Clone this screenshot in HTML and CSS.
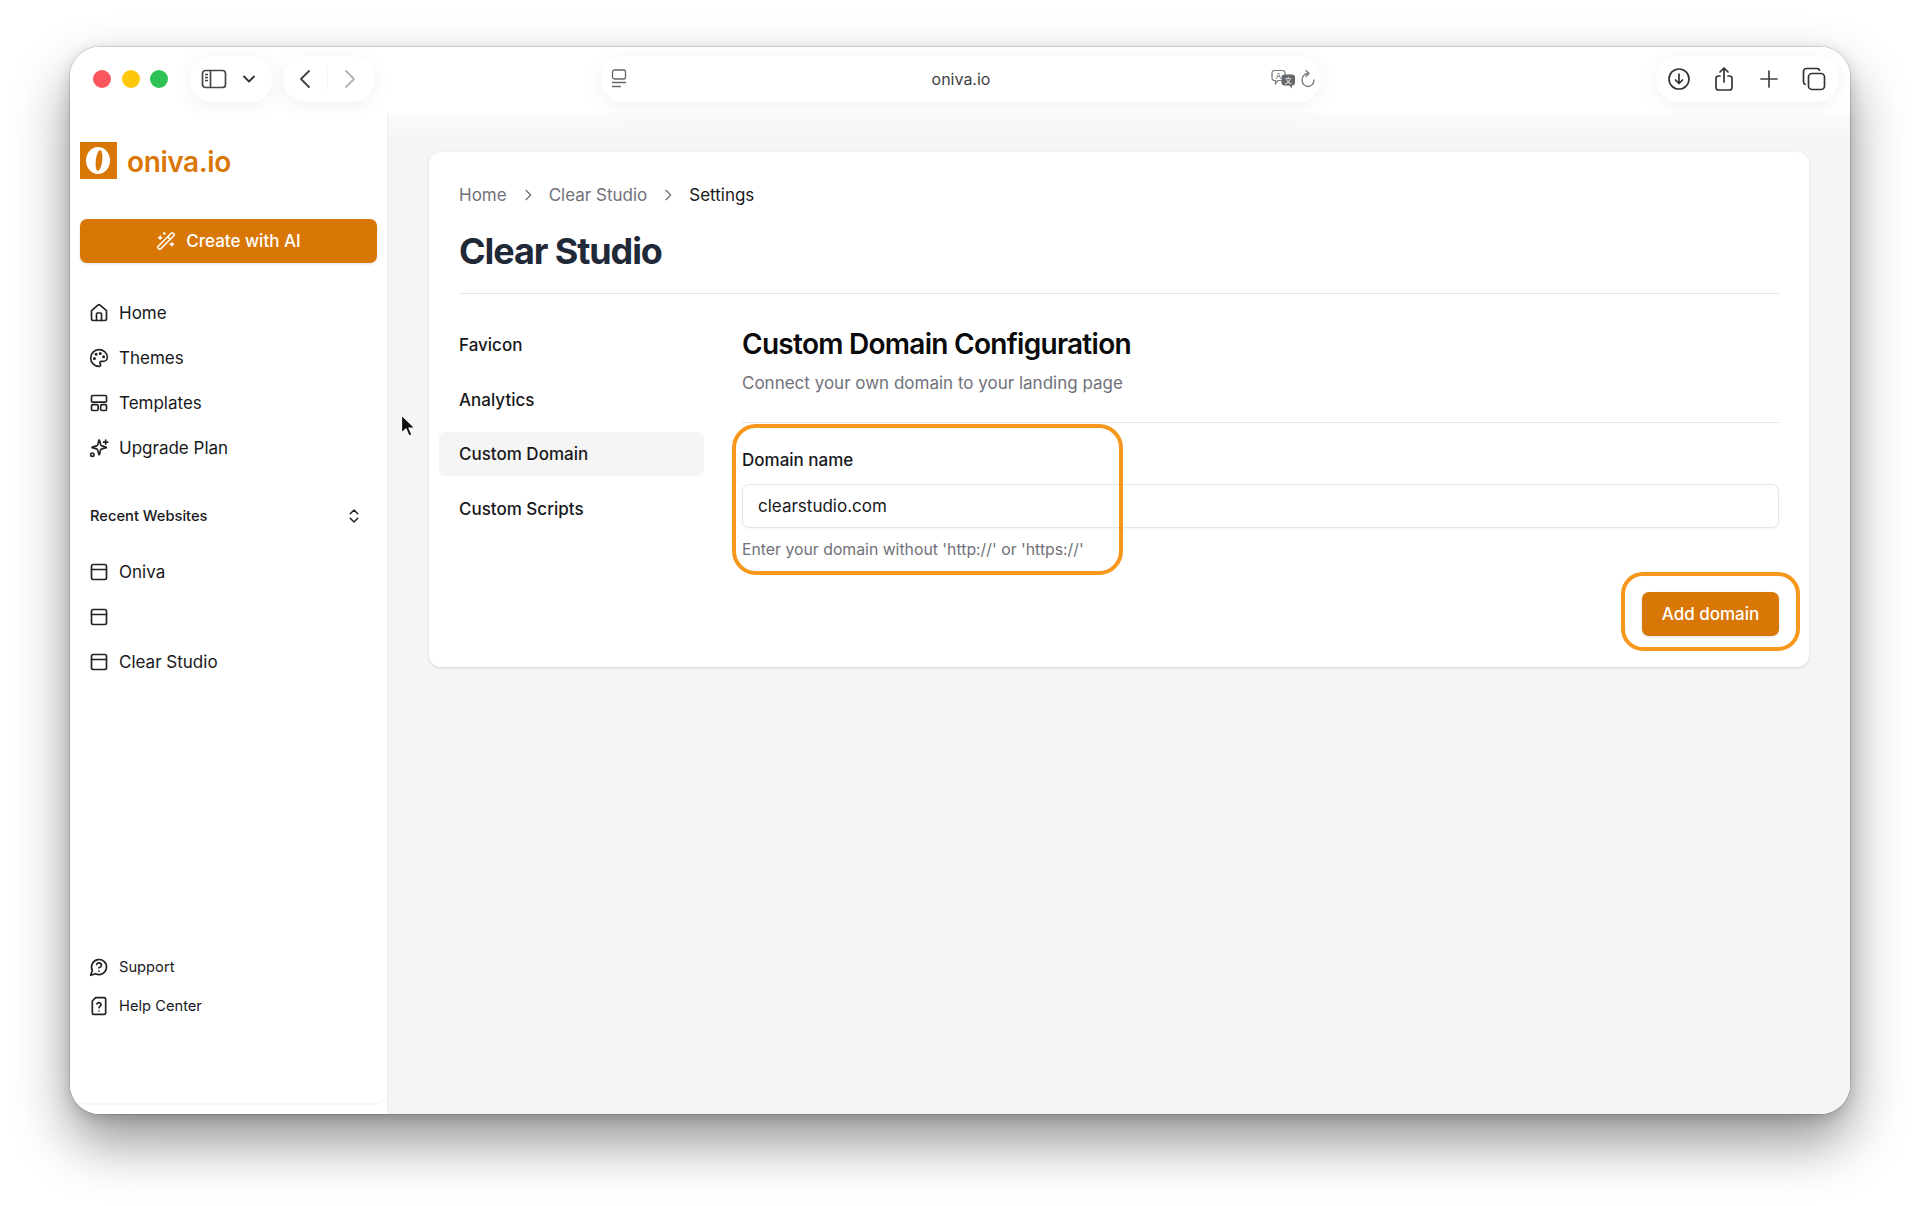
FILE: index.html
```html
<!DOCTYPE html>
<html lang="en">
<head>
    <meta charset="UTF-8">
    <meta name="viewport" content="width=device-width, initial-scale=1.0">
    <title>oniva.io - Clear Studio</title>
    <link rel="stylesheet" href="styles.css">
</head>
<body>
    <div class="window">
        <div class="toolbar">
            <div class="lights">
                <span class="light red"></span>
                <span class="light yellow"></span>
                <span class="light green"></span>
            </div>
            <div class="pill pill-sidebar">
                <svg class="tb-icon" width="26" height="20" viewBox="0 0 26 20" fill="none" stroke="#444" stroke-width="1.7"><rect x="1.5" y="1.5" width="23" height="17" rx="3"/><path d="M9.5 1.5v17"/><path d="M4 5.5h3M4 8.5h3M4 11.5h3" stroke-width="1.3"/></svg>
                <svg class="tb-icon" width="14" height="10" viewBox="0 0 14 10" fill="none" stroke="#333" stroke-width="1.8" stroke-linecap="round" stroke-linejoin="round"><path d="M2 2.5 7 7.5l5-5"/></svg>
            </div>
            <div class="pill pill-nav">
                <svg width="14" height="20" viewBox="0 0 14 20" fill="none" stroke="#444" stroke-width="1.9" stroke-linecap="round" stroke-linejoin="round"><path d="M11 2 3 10l8 8"/></svg>
                <span class="nav-sep"></span>
                <svg width="14" height="20" viewBox="0 0 14 20" fill="none" stroke="#b5b5b5" stroke-width="1.9" stroke-linecap="round" stroke-linejoin="round"><path d="m3 2 8 8-8 8"/></svg>
            </div>
            <div class="pill pill-url">
                <svg class="url-tab" width="16" height="20" viewBox="0 0 16 20" fill="none" stroke="#666" stroke-width="1.3"><rect x="1.5" y="1" width="13" height="9" rx="2"/><path d="M1 13.5h14M1 17.5h9"/></svg>
                <span class="url-text">oniva.io</span>
                <div class="url-right">
                    <svg width="25" height="20" viewBox="0 0 25 20"><path d="M3.5 1.5h8a2.5 2.5 0 0 1 2.5 2.5v5a2.5 2.5 0 0 1-2.5 2.5H7l-2.5 3v-3h-1A2.5 2.5 0 0 1 1 9V4a2.5 2.5 0 0 1 2.5-2.5z" fill="#fff" stroke="#777" stroke-width="1.2"/><text x="7.5" y="9.5" text-anchor="middle" class="tr-a">A</text><path d="M13.5 5.5H21a3 3 0 0 1 3 3v5a3 3 0 0 1-3 3v3l-2.5-3h-5a3 3 0 0 1-3-3v-5a3 3 0 0 1 3-3z" fill="#666"/><text x="17.3" y="14.3" text-anchor="middle" class="tr-b">文</text></svg>
                    <svg width="16" height="20" viewBox="0 0 16 20" fill="none" stroke="#777" stroke-width="1.3" stroke-linecap="round" stroke-linejoin="round"><path d="M8 4.500A6 6.500 0 1 0 14 11"/><path d="M6 1.500l3 3-3 3"/></svg>
                </div>
            </div>
            <div class="pill pill-actions">
                <svg width="24" height="24" viewBox="0 0 24 24" fill="none" stroke="#333" stroke-width="1.7" stroke-linecap="round" stroke-linejoin="round"><circle cx="12" cy="12" r="10"/><path d="M12 7v9.5M8.500 13l3.500 3.500 3.500-3.500"/></svg>
                <svg width="24" height="26" viewBox="0 0 24 26" fill="none" stroke="#333" stroke-width="1.7" stroke-linecap="round" stroke-linejoin="round"><path d="M8 10H6.500A2.500 2.500 0 0 0 4 12.500v9A2.500 2.500 0 0 0 6.500 24h11a2.500 2.500 0 0 0 2.500-2.500v-9a2.500 2.500 0 0 0-2.500-2.500H16"/><path d="M12 16V2M8 6l4-4 4 4"/></svg>
                <svg width="24" height="24" viewBox="0 0 24 24" fill="none" stroke="#444" stroke-width="1.7" stroke-linecap="round"><path d="M12 4v16M4 12h16"/></svg>
                <svg width="24" height="24" viewBox="0 0 24 24" fill="none" stroke="#333" stroke-width="1.7"><rect x="6.500" y="6.500" width="16" height="16" rx="3.500"/><path d="M4 17.500A2.500 2.500 0 0 1 1.500 15V4.500a3 3 0 0 1 3-3H15a2.500 2.500 0 0 1 2.500 2.500"/></svg>
            </div>
        </div>

        <div class="app">
            <aside class="sidebar">
                <div class="sidebar-inner">
                    <div class="logo">
                        <svg width="37" height="37" viewBox="0 0 37 37"><rect width="37" height="37" fill="#d97706"/><ellipse cx="18" cy="18.500" rx="12" ry="13.500" fill="#fff"/><ellipse cx="19" cy="18.500" rx="3.200" ry="10.500" transform="rotate(7 19 18.500)" fill="#d97706"/></svg>
                        <span class="logo-text">oniva.io</span>
                    </div>
                    <button class="btn-create">
                        <svg width="20" height="20" viewBox="0 0 24 24" fill="none" stroke="#fff" stroke-width="1.8" stroke-linecap="round" stroke-linejoin="round"><path d="m21.640 3.640-1.280-1.280a1.210 1.210 0 0 0-1.720 0L2.360 18.640a1.210 1.210 0 0 0 0 1.720l1.280 1.280a1.200 1.200 0 0 0 1.720 0L21.640 5.360a1.200 1.200 0 0 0 0-1.720"/><path d="m14 7 3 3M5 6v4M19 14v4M10 2v2M7 8H3M21 16h-4M11 3H9"/></svg>
                        Create with AI
                    </button>
                    <nav class="nav">
                        <a class="nav-item">
                            <svg class="icon" viewBox="0 0 24 24"><path d="M15 21v-8a1 1 0 0 0-1-1h-4a1 1 0 0 0-1 1v8"/><path d="M3 10a2 2 0 0 1 .709-1.528l7-5.999a2 2 0 0 1 2.582 0l7 5.999A2 2 0 0 1 21 10v9a2 2 0 0 1-2 2H5a2 2 0 0 1-2-2z"/></svg>
                            Home
                        </a>
                        <a class="nav-item">
                            <svg class="icon" viewBox="0 0 24 24"><path d="M12 22a1 1 0 0 1 0-20 10 9 0 0 1 10 9 5 5 0 0 1-5 5h-2.250a1.750 1.750 0 0 0-1.400 2.800l.3.4a1.750 1.750 0 0 1-1.400 2.800z"/><circle cx="13.500" cy="6.500" r=".8" fill="#222"/><circle cx="17.500" cy="10.500" r=".8" fill="#222"/><circle cx="6.500" cy="12.500" r=".8" fill="#222"/><circle cx="8.500" cy="7.500" r=".8" fill="#222"/></svg>
                            Themes
                        </a>
                        <a class="nav-item">
                            <svg class="icon" viewBox="0 0 24 24"><rect x="3" y="3" width="18" height="8" rx="1.500"/><rect x="3" y="14" width="8" height="7" rx="1.500"/><rect x="14" y="14" width="7" height="7" rx="1.500"/></svg>
                            Templates
                        </a>
                        <a class="nav-item">
                            <svg class="icon" viewBox="0 0 24 24"><path d="M9.500 14.500A2 2 0 0 0 8 13l-5-1.300a.4.4 0 0 1 0-.8L8 9.500A2 2 0 0 0 9.500 8l1.300-5.200a.4.4 0 0 1 .8 0L13 8a2 2 0 0 0 1.500 1.500l5 1.400a.4.4 0 0 1 0 .8l-5 1.300A2 2 0 0 0 13 14l-1.400 5.600a.4.4 0 0 1-.8 0z" transform="translate(1 0)"/><path d="M20 2.500v5M17.500 5h5"/><circle cx="4" cy="20" r="2"/></svg>
                            Upgrade Plan
                        </a>
                    </nav>
                    <div class="recent-head">
                        <span>Recent Websites</span>
                        <svg class="icon-sm" viewBox="0 0 24 24"><path d="m7 15 5 5 5-5"/><path d="m7 9 5-5 5 5"/></svg>
                    </div>
                    <nav class="nav">
                        <a class="nav-item">
                            <svg class="icon" viewBox="0 0 24 24"><rect x="3" y="3" width="18" height="18" rx="2"/><path d="M3 9h18"/></svg>
                            Oniva
                        </a>
                        <a class="nav-item">
                            <svg class="icon" viewBox="0 0 24 24"><rect x="3" y="3" width="18" height="18" rx="2"/><path d="M3 9h18"/></svg>
                        </a>
                        <a class="nav-item">
                            <svg class="icon" viewBox="0 0 24 24"><rect x="3" y="3" width="18" height="18" rx="2"/><path d="M3 9h18"/></svg>
                            Clear Studio
                        </a>
                    </nav>
                    <div class="nav-bottom">
                        <a class="nav-item small">
                            <svg class="icon" viewBox="0 0 24 24"><path d="M7.900 20A9 9 0 1 0 4 16.100L2 22Z"/><path d="M9.090 9a3 3 0 0 1 5.830 1c0 2-3 3-3 3"/><path d="M12 17h.01"/></svg>
                            Support
                        </a>
                        <a class="nav-item small">
                            <svg class="icon" viewBox="0 0 24 24"><path d="M8 2h10a2 2 0 0 1 2 2v16a2 2 0 0 1-2 2H6a2 2 0 0 1-2-2V6z"/><path d="M9.500 9.500a2.600 2.600 0 0 1 5 .8c0 1.700-2.500 2.400-2.500 3.700"/><path d="M12 18h.01"/></svg>
                            Help Center
                        </a>
                    </div>
                </div>
            </aside>

            <main class="main">
                <section class="card">
                    <div class="breadcrumb">
                        <span>Home</span>
                        <svg class="crumb-sep" viewBox="0 0 24 24"><path d="m9 5 7 7-7 7"/></svg>
                        <span>Clear Studio</span>
                        <svg class="crumb-sep" viewBox="0 0 24 24"><path d="m9 5 7 7-7 7"/></svg>
                        <span class="current">Settings</span>
                    </div>
                    <h1>Clear Studio</h1>
                    <div class="settings">
                        <ul class="tabs">
                            <li>Favicon</li>
                            <li>Analytics</li>
                            <li class="active">Custom Domain</li>
                            <li>Custom Scripts</li>
                        </ul>
                        <div class="panel">
                            <h2>Custom Domain Configuration</h2>
                            <p class="sub">Connect your own domain to your landing page</p>
                            <label class="field-label" for="domain">Domain name</label>
                            <input class="field" id="domain" type="text" value="clearstudio.com">
                            <p class="hint">Enter your domain without 'http://' or 'https://'</p>
                            <div class="actions">
                                <button class="btn-add">Add domain</button>
                            </div>
                        </div>
                    </div>
                </section>
            </main>
        </div>

        <!-- annotation boxes + pointer drawn over the shot -->
        <div class="mark mark-field"></div>
        <div class="mark mark-button"></div>
        <svg class="cursor" width="16" height="24" viewBox="0 0 16 24"><path d="M1.500 1v18l4.500-4 3 7 3-1.300-3-6.700h6z" fill="#111" stroke="#fff" stroke-width="1.200"/></svg>
    </div>
</body>
</html>
```

FILE: styles.css
```css
* {
    box-sizing: border-box;
}
body {
    margin: 0;
    background: #fff;
    font-family: Inter, "Liberation Sans", sans-serif;
    color: #18181b;
}
.window {
    position: relative;
    width: 1780px;
    height: 1067px;
    margin: 47px 70px 0;
    background: #fff;
    border-radius: 30px;
    overflow: hidden;
}
body::before {
    content: "";
    position: absolute;
    left: 70px;
    top: 47px;
    width: 1780px;
    height: 1067px;
    border-radius: 30px;
    box-shadow: 0 0 0 1px rgba(0, 0, 0, .12), 0 28px 55px rgba(0, 0, 0, .42), 0 4px 14px rgba(0, 0, 0, .16);
}

/* browser toolbar */
.toolbar {
    display: flex;
    align-items: center;
    height: 66px;
    padding: 0 12px 2px 23px;
    background: #fff;
}
.lights {
    display: flex;
    gap: 10.5px;
    width: 97px;
}
.light {
    width: 18px;
    height: 18px;
    border-radius: 50%;
}
.red { background: #f9575f; }
.yellow { background: #fdc70a; }
.green { background: #2fc255; }
.pill {
    display: flex;
    align-items: center;
    height: 46px;
    border-radius: 23px;
    background: #fff;
    box-shadow: 0 4px 22px rgba(0, 0, 0, .06);
}
.pill-sidebar {
    width: 83px;
    padding: 0 17px 0 11px;
    justify-content: space-between;
}
.pill-nav {
    width: 91px;
    margin-left: 10px;
    padding: 0 17px 0 15px;
    justify-content: space-between;
}
.nav-sep {
    width: 1px;
    height: 24px;
    background: #f4f4f4;
}
.pill-url {
    position: relative;
    width: 720px;
    margin-left: 227px;
    justify-content: center;
}
.url-tab {
    position: absolute;
    left: 10px;
    top: 13px;
}
.url-text {
    font-size: 16px;
    color: #3f3f46;
}
.url-right {
    position: absolute;
    right: 5px;
    top: 13px;
    display: flex;
    gap: 4px;
}
.tr-a {
    font-family: Inter, sans-serif;
    font-size: 8px;
    fill: #777;
}
.tr-b {
    font-family: "Noto Sans CJK SC", sans-serif;
    font-size: 7px;
    fill: #fff;
}
.pill-actions {
    width: 182px;
    margin-left: auto;
    padding: 0 12px 0 11px;
    justify-content: space-between;
}

.app {
    display: flex;
    height: 1001px;
}

/* sidebar */
.sidebar {
    width: 318px;
    padding-bottom: 9px;
    border-right: 1px solid #efefef;
    background: #fff;
}
.sidebar-inner {
    display: flex;
    flex-direction: column;
    height: 100%;
    padding: 29px 10px 0;
    border-radius: 0 0 14px 14px;
    border-bottom: 2px solid #f7f7f7;
}
.logo {
    display: flex;
    align-items: center;
    gap: 10px;
    height: 37px;
}
.logo-text {
    margin-top: 2px;
    font-size: 28px;
    font-weight: 600;
    color: #d97706;
    letter-spacing: -.4px;
}
.btn-create {
    display: flex;
    align-items: center;
    justify-content: center;
    gap: 10px;
    width: 297px;
    height: 44px;
    margin-top: 40px;
    border: none;
    border-radius: 7px;
    background: #d97706;
    color: #fff;
    font-family: inherit;
    font-size: 17px;
    font-weight: 500;
    box-shadow: 0 1px 3px rgba(0, 0, 0, .12);
}
.nav {
    display: flex;
    flex-direction: column;
    margin-top: 27px;
}
.nav-item {
    display: flex;
    align-items: center;
    gap: 10px;
    height: 45px;
    padding-left: 9px;
    font-size: 17px;
}
.nav-item.small {
    height: 39px;
    font-size: 14.7px;
}
.icon, .icon-sm, .crumb-sep {
    flex: none;
    fill: none;
    stroke: #222;
    stroke-width: 2;
    stroke-linecap: round;
    stroke-linejoin: round;
}
.icon {
    width: 20px;
    height: 20px;
}
.icon-sm {
    width: 18px;
    height: 18px;
}
.recent-head {
    display: flex;
    align-items: center;
    justify-content: space-between;
    height: 20px;
    margin-top: 36px;
    padding: 0 14px 0 10px;
    font-size: 14.7px;
    font-weight: 500;
}
.recent-head + .nav {
    margin-top: 23px;
}
.nav-bottom {
    margin-top: auto;
    padding-bottom: 78px;
}

/* main area */
.main {
    flex: 1;
    padding: 39px 41px 0;
    background: linear-gradient(#fbfbfb, #f5f5f5 24px);
}
.card {
    height: 515px;
    padding: 31px 30px 0;
    background: #fff;
    border-radius: 12px;
    box-shadow: 0 1px 3px rgba(0, 0, 0, .13);
}
.breadcrumb {
    display: flex;
    align-items: center;
    height: 24px;
    font-size: 17px;
    color: #71717a;
}
.crumb-sep {
    width: 16px;
    height: 16px;
    margin: 0 13px;
    stroke: #71717a;
    stroke-width: 2;
}
.current {
    color: #18181b;
}
h1 {
    height: 64px;
    margin: 23px 0 0;
    border-bottom: 1px solid #e5e5e5;
    font-size: 36px;
    line-height: 42px;
    font-weight: 700;
    letter-spacing: -1.1px;
    color: #1f2937;
}
.settings {
    display: flex;
    margin-top: 29px;
}
.tabs {
    width: 265px;
    margin: 0 0 0 -20px;
    padding: 0;
    list-style: none;
}
.tabs li {
    display: flex;
    align-items: center;
    height: 44px;
    margin-bottom: 10.7px;
    padding-left: 20px;
    border-radius: 6px;
    font-size: 17px;
    font-weight: 500;
}
.tabs .active {
    background: #f5f5f5;
}
.panel {
    flex: 1;
    margin-left: 38px;
    padding-top: 3px;
}
h2 {
    margin: 0;
    font-size: 28px;
    line-height: 36px;
    font-weight: 600;
    letter-spacing: -.72px;
    color: #0a0a0a;
}
.sub {
    margin: 10px 0 0;
    padding-bottom: 28px;
    border-bottom: 1px solid #e5e5e5;
    font-size: 17px;
    line-height: 22px;
    color: #71717a;
}
.field-label {
    display: block;
    margin-top: 26px;
    font-size: 17px;
    line-height: 22px;
    font-weight: 500;
}
.field {
    display: block;
    width: 100%;
    height: 44px;
    margin-top: 13px;
    padding: 0 15px;
    border: 1px solid #e5e5e5;
    border-radius: 7px;
    outline: none;
    font-family: inherit;
    font-size: 17px;
    color: #18181b;
    box-shadow: 0 1px 2px rgba(0, 0, 0, .04);
}
.hint {
    margin: 12px 0 0;
    font-size: 15.8px;
    line-height: 20px;
    color: #71717a;
}
.actions {
    display: flex;
    justify-content: flex-end;
    margin-top: 32px;
}
.btn-add {
    width: 137px;
    height: 44px;
    border: none;
    border-radius: 7px;
    background: #d97706;
    color: #fff;
    font-family: inherit;
    font-size: 17px;
    font-weight: 500;
    box-shadow: 0 1px 3px rgba(0, 0, 0, .12);
}

/* overlays */
.mark {
    position: absolute;
    border: 4px solid #f7981d;
}
.mark-field {
    left: 662px;
    top: 377px;
    width: 391px;
    height: 151px;
    border-radius: 24px;
}
.mark-button {
    left: 1551px;
    top: 525px;
    width: 179px;
    height: 79px;
    border-radius: 22px;
}
.cursor {
    position: absolute;
    left: 330px;
    top: 367px;
}
```
